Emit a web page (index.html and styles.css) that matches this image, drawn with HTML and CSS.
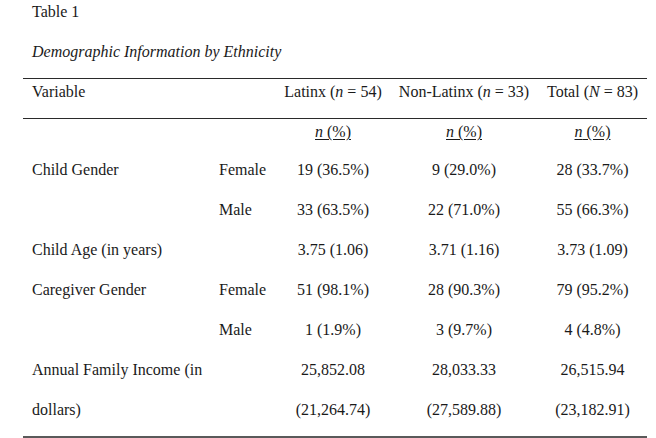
FILE: index.html
```html
<!DOCTYPE html>
<html>
<head>
<meta charset="utf-8">
<link rel="stylesheet" href="styles.css">
</head>
<body>
<div class="page">
  <p class="label">Table 1</p>
  <p class="title">Demographic Information by Ethnicity</p>
  <table class="data">
    <colgroup>
      <col class="c1"><col class="c2"><col class="c3"><col class="c4"><col class="c5">
    </colgroup>
    <thead>
      <tr class="head">
        <th class="left">Variable</th>
        <th></th>
        <th>Latinx (<i>n</i> = 54)</th>
        <th>Non-Latinx (<i>n</i> = 33)</th>
        <th>Total (<i>N</i> = 83)</th>
      </tr>
    </thead>
    <tbody>
      <tr class="sub">
        <td></td><td></td>
        <td><span class="u"><i>n</i> (%)</span></td>
        <td><span class="u"><i>n</i> (%)</span></td>
        <td><span class="u"><i>n</i> (%)</span></td>
      </tr>
      <tr>
        <td class="left">Child Gender</td><td class="left">Female</td>
        <td>19 (36.5%)</td><td>9 (29.0%)</td><td>28 (33.7%)</td>
      </tr>
      <tr>
        <td></td><td class="left">Male</td>
        <td>33 (63.5%)</td><td>22 (71.0%)</td><td>55 (66.3%)</td>
      </tr>
      <tr>
        <td class="left">Child Age (in years)</td><td></td>
        <td>3.75 (1.06)</td><td>3.71 (1.16)</td><td>3.73 (1.09)</td>
      </tr>
      <tr>
        <td class="left">Caregiver Gender</td><td class="left">Female</td>
        <td>51 (98.1%)</td><td>28 (90.3%)</td><td>79 (95.2%)</td>
      </tr>
      <tr>
        <td></td><td class="left">Male</td>
        <td>1 (1.9%)</td><td>3 (9.7%)</td><td>4 (4.8%)</td>
      </tr>
      <tr class="last">
        <td class="left">Annual Family Income (in<br>dollars)</td><td></td>
        <td>25,852.08<br>(21,264.74)</td>
        <td>28,033.33<br>(27,589.88)</td>
        <td>26,515.94<br>(23,182.91)</td>
      </tr>
    </tbody>
  </table>
</div>
</body>
</html>
```
FILE: styles.css
```css
html, body {
  margin: 0;
  padding: 0;
  background: #ffffff;
}
body {
  font-family: "Liberation Serif", "Times New Roman", serif;
  font-size: 16px;
  color: #1a1a1a;
}
.page {
  padding: 2px 0 0 23px;
}
.label {
  margin: 0 0 0 9px;
  line-height: 20px;
}
.title {
  margin: 20px 0 0 9px;
  line-height: 20px;
  font-style: italic;
}
.data {
  margin-top: 16px;
  width: 624px;
  border-collapse: collapse;
  table-layout: fixed;
}
.c1 { width: 187px; }
.c2 { width: 66px; }
.c3 { width: 114px; }
.c4 { width: 148px; }
.c5 { width: 109px; }
.data th, .data td {
  padding: 0 0 0 9px;
  text-align: center;
  font-weight: normal;
  white-space: nowrap;
  vertical-align: top;
}
.data th:nth-child(n+3), .data td:nth-child(n+3) {
  padding-left: 0;
}
.data .left {
  text-align: left;
}
.head th {
  border-top: 1px solid #2a2a2a;
  border-bottom: 1px solid #2a2a2a;
  padding-top: 3px;
  padding-bottom: 16px;
  line-height: 20px;
}
.sub td {
  padding-top: 3px;
  padding-bottom: 8px;
  line-height: 20px;
}
.u {
  text-decoration: underline;
  text-underline-offset: 2px;
}
tbody tr:not(.sub) td {
  line-height: 40px;
}
.last td {
  padding-bottom: 6px;
  border-bottom: 2px solid #5a5a5a;
}
```
